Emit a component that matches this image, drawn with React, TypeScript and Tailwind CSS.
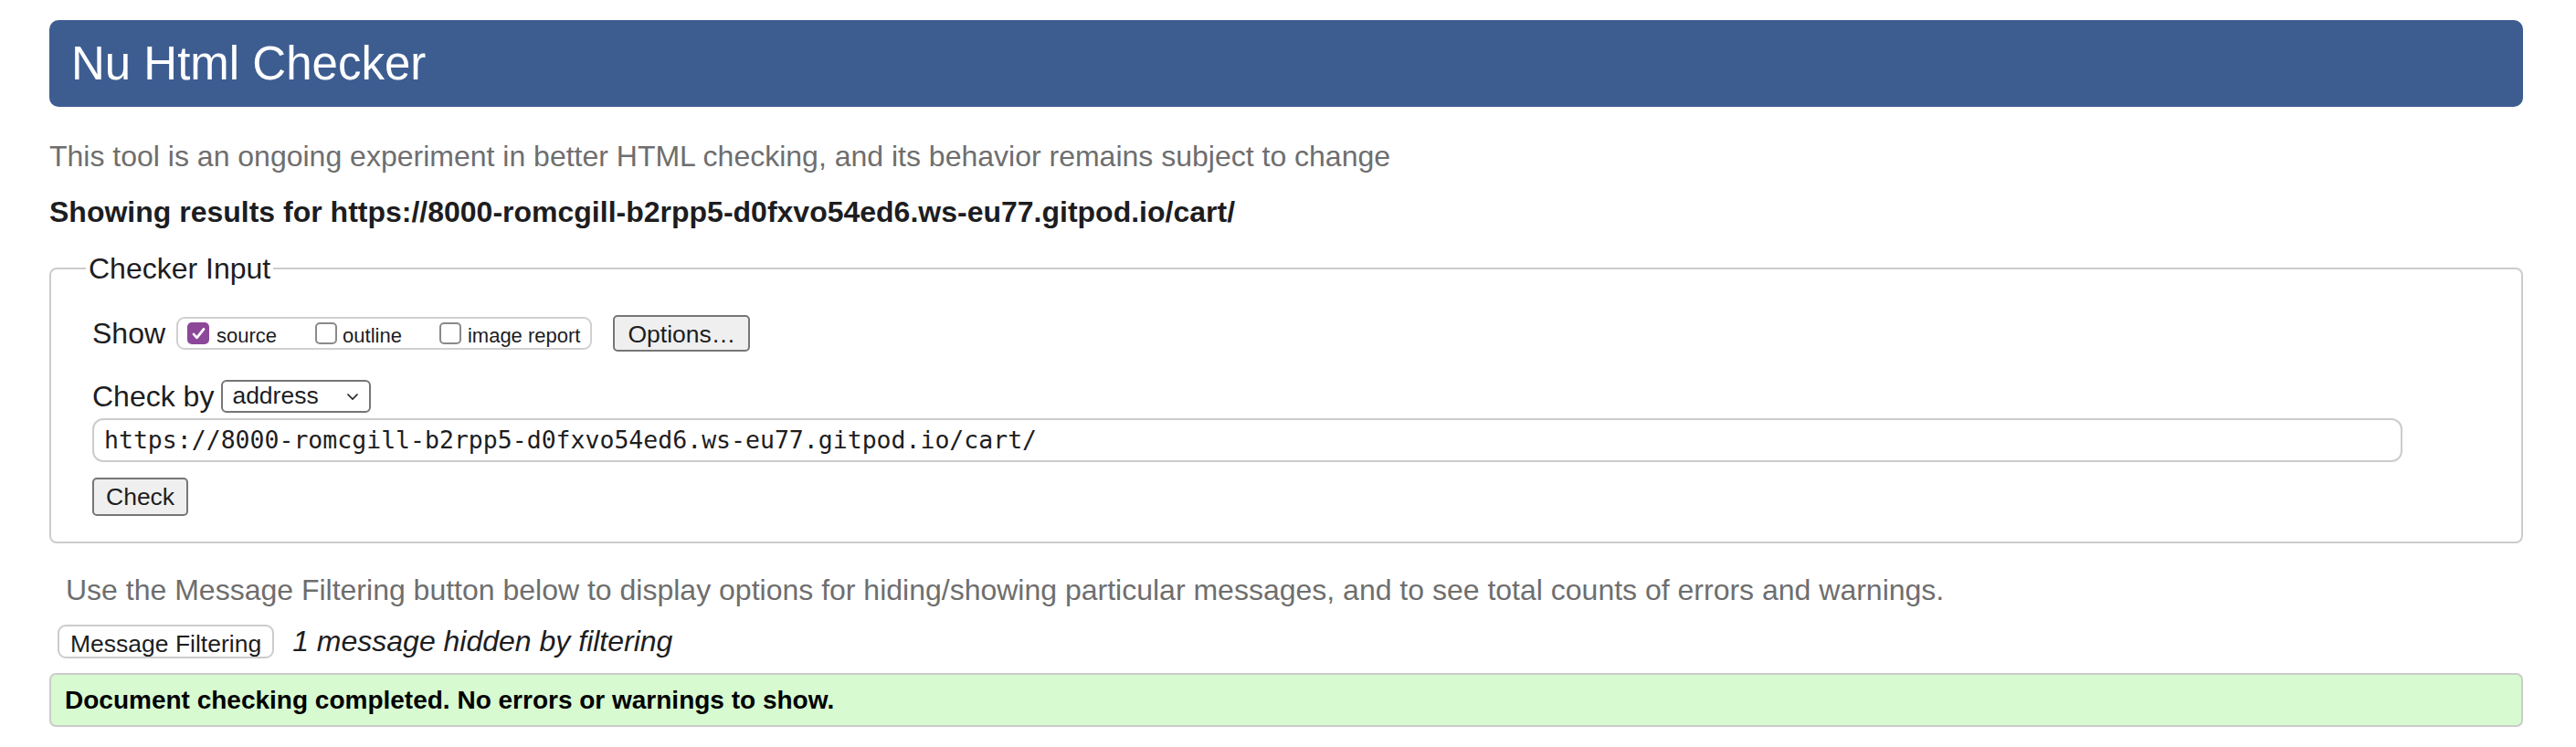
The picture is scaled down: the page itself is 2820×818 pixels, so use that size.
import { useState } from "react";

const url = "https://8000-romcgill-b2rpp5-d0fxvo54ed6.ws-eu77.gitpod.io/cart/";

function Box({ checked }: { checked?: boolean }) {
  if (checked) {
    return (
      <span className="flex h-[24px] w-[24px] shrink-0 items-center justify-center rounded-[5px] bg-[#8c4799]">
        <svg viewBox="0 0 24 24" className="h-[19px] w-[19px]" fill="none" stroke="white" strokeWidth="3.4" strokeLinecap="round" strokeLinejoin="round">
          <path d="M5 12.5l4.5 5L19 5.5" />
        </svg>
      </span>
    );
  }
  return <span className="h-[24px] w-[24px] shrink-0 rounded-[5px] border-2 border-[#8a8a8a] bg-white" />;
}

export default function App() {
  const [show] = useState({ source: true, outline: false, image: false });

  return (
    <div className="min-h-screen bg-white font-['Liberation_Sans',Arial,sans-serif] text-[#1d1d1f]">
      <div className="ml-[54px] mr-[58px] pt-[22px]">
        <header className="flex h-[95px] items-center rounded-[10px] bg-[#3d5d91] pl-[24px]">
          <h1 className="text-[51px] leading-none text-white">Nu Html Checker</h1>
        </header>

        <p className="mt-[35px] text-[32px] leading-[38px] text-[#6e6e6e]">
          This tool is an ongoing experiment in better HTML checking, and its behavior remains subject to change
        </p>
        <p className="mt-[23px] text-[32px] font-bold leading-[38px] text-[#1d1d1f]">Showing results for {url}</p>

        <fieldset className="mt-[24px] rounded-[8px] border-2 border-[#cccccc] pb-[28px] pl-[45px] pr-[130px] pt-[32px]">
          <legend className="-ml-[7px] px-[3px] text-[32px] leading-[38px] text-[#1d1d1f]">Checker Input</legend>

          <div className="flex h-[40px] items-center">
            <span className="mr-[12px] text-[32px]">Show</span>
            <div className="flex h-[36px] items-center rounded-[9px] border-2 border-[#d0d0d0] pl-[10px] pr-[11px] text-[22px]">
              <label className="mr-[42px] flex items-center gap-[8px]">
                <Box checked={show.source} />
                <span className="mt-[4px]">source</span>
              </label>
              <label className="mr-[41px] flex items-center gap-[6px]">
                <Box checked={show.outline} />
                <span className="mt-[4px]">outline</span>
              </label>
              <label className="flex items-center gap-[7px]">
                <Box checked={show.image} />
                <span className="mt-[4px]">image report</span>
              </label>
            </div>
            <button className="ml-[23px] h-[40px] rounded-[5px] border-2 border-[#767676] bg-[#efefef] px-[14px] text-[26.5px]">
              Options…
            </button>
          </div>

          <div className="mt-[31px] flex h-[36px] items-center">
            <span className="mr-[8px] text-[32px]">Check by</span>
            <div className="flex h-[36px] w-[164px] items-center justify-between rounded-[6px] border-2 border-[#767676] bg-white pl-[10px] pr-[10px] text-[26.5px]">
              <span>address</span>
              <svg viewBox="0 0 16 16" className="h-[16px] w-[16px]" fill="none" stroke="#222" strokeWidth="1.6">
                <path d="M2.5 5.5L8 11l5.5-5.5" />
              </svg>
            </div>
          </div>

          <div className="mt-[6px] flex h-[48px] items-center rounded-[12px] border-2 border-[#cccccc] px-[11px] font-['DejaVu_Sans_Mono',Menlo,monospace] text-[26.5px]">
            {url}
          </div>

          <button className="mt-[17px] h-[42px] rounded-[5px] border-2 border-[#767676] bg-[#efefef] px-[13px] text-[26.5px]">
            Check
          </button>
        </fieldset>

        <p className="mt-[32px] pl-[18px] text-[32px] leading-[38px] text-[#6e6e6e]">
          Use the Message Filtering button below to display options for hiding/showing particular messages, and to see total counts of errors and warnings.
        </p>

        <div className="mt-[19px] flex h-[37px] items-center pl-[9px]">
          <button className="h-[37px] rounded-[9px] border-2 border-[#cccccc] bg-white px-[12px] text-[26.5px]">
            Message Filtering
          </button>
          <span className="ml-[20px] text-[32px] leading-[37px] italic">1 message hidden by filtering</span>
        </div>

        <div className="mt-[16px] flex h-[59px] items-center rounded-[7px] border-2 border-[#cccccc] bg-[#d7fad0] pl-[15px] text-[28px] font-bold text-black">
          Document checking completed. No errors or warnings to show.
        </div>
      </div>
    </div>
  );
}
